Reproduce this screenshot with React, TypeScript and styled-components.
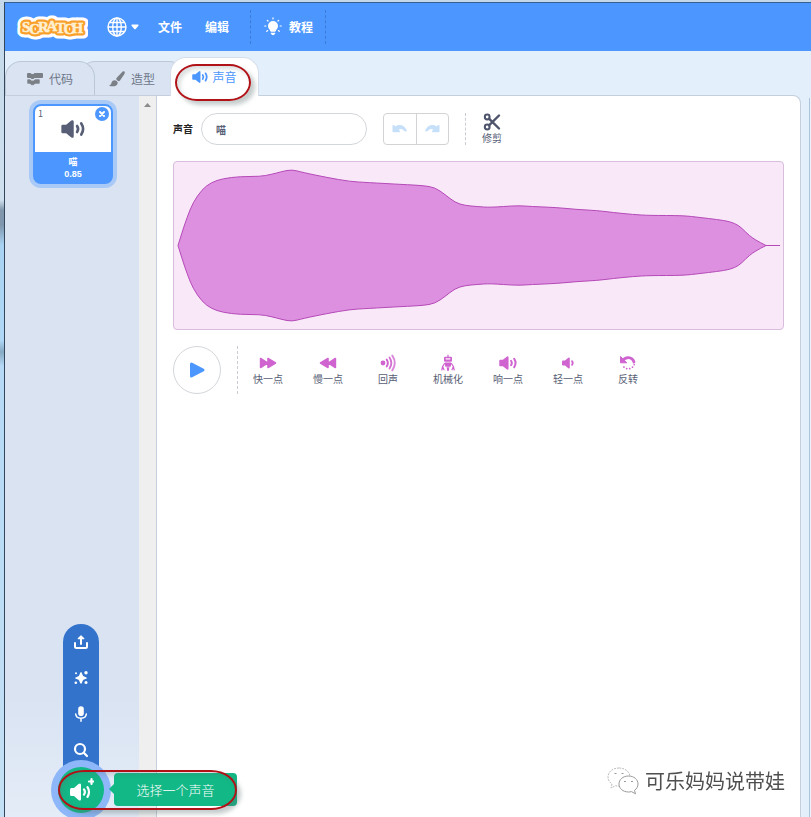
import React from "react";
import styled, { createGlobalStyle, css } from "styled-components";

const font = `"Noto Sans CJK SC", "Liberation Sans", sans-serif`;
const blue = "#4c97ff";
const slate = "#575e75";
const line = "#c5cfdb";
const panel = "#d9e3f2";
const violet = "#cf63cf";

const GlobalStyle = createGlobalStyle`
  *, *::before, *::after { box-sizing: border-box; }
  body { margin: 0; font-family: ${font}; font-size: 12px; color: ${slate}; }
  button, input { font: inherit; color: inherit; margin: 0; padding: 0; border: 0; background: none; }
  button { cursor: pointer; }
  svg { display: block; flex: none; }
`;

const Desktop = styled.div`
  height: 100vh;
  min-height: 640px;
  padding: 2px 0 0 4px;
  overflow: hidden;
  background: linear-gradient(#c3d9ea 0, #cfe0ee 200px, #8297ad 210px, #7f96ae 225px, #a9d3f2 245px, #b0d8f6 340px, #86a9c4 352px, #b5d9f6 366px, #c4e0f4 100%);
`;

const Window = styled.div`
  height: 100%;
  display: flex;
  flex-direction: column;
  border-top: 1px solid #35608f;
  border-left: 1px solid #34465c;
  background: #e4effc;
`;

const MenuBar = styled.header`
  flex: none;
  height: 48px;
  display: flex;
  align-items: center;
  padding-left: 10px;
  background: ${blue};
  color: #fff;
  font-weight: 700;
`;

const MenuButton = styled.button<{ $start?: number }>`
  display: flex;
  align-items: center;
  gap: 4px;
  line-height: 16px;
  margin-left: ${(p) => p.$start ?? 0}px;
`;

const MenuDivider = styled.span<{ $start: number }>`
  width: 0;
  height: 34px;
  margin-left: ${(p) => p.$start}px;
  border-left: 1px dashed #3b7bd6;
`;

const Tabs = styled.nav`
  flex: none;
  display: flex;
  align-items: flex-end;
  height: 44px;
`;

const Tab = styled.button<{ $active?: boolean; $tuck?: boolean }>`
  position: relative;
  display: flex;
  align-items: center;
  justify-content: center;
  gap: 6px;
  width: 90px;
  height: 34px;
  line-height: 16px;
  border: 1px solid #bcc8d6;
  border-bottom: 0;
  border-radius: 16px 16px 0 0;
  background: ${panel};
  color: #6f7689;
  z-index: 1;
  ${(p) =>
    p.$tuck &&
    css`
      width: 106px;
      margin-left: -16px;
      z-index: 0;
    `}
  ${(p) =>
    p.$active &&
    css`
      gap: 4px;
      width: 89px;
      height: 39px;
      margin-left: -15px;
      margin-bottom: -1px;
      border-color: #d5deea;
      background: #fff;
      color: ${blue};
      z-index: 2;
    `}
`;

const Marker = styled.span<{ $wide?: boolean }>`
  position: absolute;
  top: ${(p) => (p.$wide ? -3 : 6)}px;
  left: ${(p) => (p.$wide ? -56 : 4)}px;
  width: ${(p) => (p.$wide ? 179 : 76)}px;
  height: ${(p) => (p.$wide ? 40 : 37)}px;
  border: 2px solid #b01218;
  border-radius: ${(p) => (p.$wide ? "26px / 20px" : "22px / 19px")};
  box-shadow: 4px 4px 4px rgba(90, 110, 110, 0.35), inset 3px 3px 4px rgba(90, 110, 110, 0.22);
  pointer-events: none;
`;

const Body = styled.div`
  flex: 1;
  min-height: 0;
  display: grid;
  grid-template-columns: 152px minmax(0, 1fr) 2px;
`;

const Sidebar = styled.aside`
  position: relative;
  display: flex;
  border-top: 1px solid ${line};
  border-right: 1px solid ${line};
  background: linear-gradient(${panel} 0, ${panel} 600px, #e4ecf7 100%);
`;

const SoundList = styled.div`
  flex: 1;
  display: flex;
  flex-direction: column;
  align-items: center;
  padding: 8px 0 0 2px;
`;

const ScrollTrack = styled.div`
  width: 17px;
  padding-top: 7px;
  display: flex;
  justify-content: center;
  background: #efeff0;
`;

const SoundCard = styled.div`
  position: relative;
  width: 80px;
  height: 80px;
  display: flex;
  flex-direction: column;
  border: 2px solid ${blue};
  border-radius: 8px;
  background: ${blue};
  box-shadow: 0 0 0 4px #a9c9f6;
`;

const CardPreview = styled.div`
  height: 46px;
  display: flex;
  align-items: center;
  justify-content: center;
  border-radius: 6px 6px 0 0;
  background: #fff;
`;

const CardIndex = styled.span`
  position: absolute;
  top: 2px;
  left: 3px;
  font-size: 9px;
  line-height: 12px;
`;

const CardClose = styled.button`
  position: absolute;
  top: 1px;
  right: 2px;
  width: 14px;
  height: 14px;
  display: grid;
  place-items: center;
  border-radius: 50%;
  background: ${blue};
`;

const CardCaption = styled.div`
  flex: 1;
  padding-top: 4px;
  text-align: center;
  color: #fff;
  font-size: 9px;
  font-weight: 700;
  line-height: 12px;
`;

const CardText = styled.div`
  font-family: "Liberation Sans", ${font};
  font-size: 9px;
`;

const AddMenu = styled.div`
  position: absolute;
  bottom: 4px;
  left: 0;
  right: 0;
  display: flex;
  flex-direction: column;
  align-items: center;
`;

const AddOptions = styled.div`
  display: flex;
  flex-direction: column;
  width: 36px;
  height: 165px;
  margin-bottom: -22px;
  border-radius: 18px 18px 0 0;
  background: #3373cc;
`;

const AddOption = styled.button`
  width: 36px;
  height: 36px;
  display: grid;
  place-items: center;
`;

const AddButton = styled.button`
  position: relative;
  width: 46px;
  height: 46px;
  display: grid;
  place-items: center;
  border-radius: 50%;
  background: #12b886;
  box-shadow: 0 0 0 7px #8db7f8;
`;

const Tip = styled.div`
  position: absolute;
  z-index: 3;
  bottom: 11px;
  left: 109px;
  width: 123px;
  height: 33px;
  display: grid;
  place-items: center;
  border-radius: 4px;
  background: #12b886;
  color: #fff;
  font-size: 13px;
  font-weight: 300;
  line-height: 20px;
  &::before {
    content: "";
    position: absolute;
    left: -5px;
    top: 11px;
    border: 5px solid transparent;
    border-left: 0;
    border-right-color: #12b886;
  }
`;

const Editor = styled.main`
  display: flex;
  flex-direction: column;
  gap: 16px;
  min-width: 0;
  margin-right: 8px;
  padding: 17px 16px 16px;
  border-top: 1px solid ${line};
  border-right: 1px solid ${line};
  border-top-right-radius: 8px;
  background: #fff;
`;

const StageEdge = styled.div`
  margin-top: 3px;
  border-left: 1px solid #a9c3d8;
  background: #eaf2fc;
`;

const Row = styled.div`
  display: flex;
  align-items: center;
`;

const NameLabel = styled.label`
  display: flex;
  align-items: center;
  gap: 8px;
  font-size: 10px;
  line-height: 14px;
  font-weight: 700;
  color: #222;
`;

const NameInput = styled.input`
  width: 166px;
  height: 32px;
  padding: 0 14px;
  border: 1px solid #d3d6da;
  border-radius: 16px;
  color: ${slate};
  font-size: 10px;
  outline: 0;
`;

const History = styled.div`
  display: flex;
  width: 66px;
  height: 32px;
  margin-left: 16px;
  border: 1px solid #d3d3d6;
  border-radius: 4px;
`;

const HistoryButton = styled.button`
  flex: 1;
  display: grid;
  place-items: center;
  & + & {
    border-left: 1px solid #d3d3d6;
  }
`;

const Dash = styled.span<{ $tall?: boolean }>`
  height: ${(p) => (p.$tall ? 48 : 32)}px;
  margin-left: 16px;
  border-left: 1px dashed #c9ccd2;
`;

const ToolButton = styled.button<{ $compact?: boolean }>`
  width: ${(p) => (p.$compact ? 52 : 60)}px;
  display: flex;
  flex-direction: column;
  align-items: center;
  font-size: 10px;
  line-height: 14px;
`;

const Wave = styled.div`
  height: 169px;
  border: 1px solid #d9bddc;
  border-radius: 4px;
  background: #f8e8f8;
  svg {
    width: 100%;
    height: 100%;
  }
`;

const PlayButton = styled.button`
  width: 48px;
  height: 48px;
  display: grid;
  place-items: center;
  border: 1px solid #d3d6da;
  border-radius: 50%;
`;

const Signature = styled.div`
  position: fixed;
  right: 26px;
  bottom: 21px;
  display: flex;
  align-items: center;
  gap: 6px;
  font-size: 20px;
  line-height: 30px;
  color: #4f4f4f;
`;

/* Half heights of the recorded sound along the 609 unit wide track. */
const samples: [number, number][] = [
  [4, 0], [8, 13], [13, 28], [19, 43], [28, 56], [37, 63], [49, 67], [66, 69], [86, 69],
  [97, 71], [108, 74], [118, 76], [129, 73], [153, 68], [176, 64], [193, 63], [229, 61],
  [249, 60], [261, 58], [271, 51], [281, 43], [291, 40], [303, 39], [316, 38], [343, 40],
  [357, 39], [383, 38], [403, 36], [423, 35], [439, 33], [459, 31], [476, 30], [509, 30],
  [526, 28], [543, 26], [556, 24], [565, 20], [571, 14], [580, 6], [592, 0],
];

function smooth(points: [number, number][]) {
  let d = "";
  for (let i = 1; i < points.length - 1; i++) {
    const [x, y] = points[i];
    const [nx, ny] = points[i + 1];
    const last = i === points.length - 2;
    d += ` Q${x} ${y} ${last ? nx : (x + nx) / 2} ${last ? ny : (y + ny) / 2}`;
  }
  return d;
}

function Waveform() {
  const mid = 83.5;
  const top = samples.map(([x, a]) => [x, mid - a] as [number, number]);
  const low = samples.map(([x, a]) => [x, mid + a] as [number, number]).reverse();
  return (
    <svg viewBox="0 0 609 167" preserveAspectRatio="none" aria-hidden="true">
      <path
        d={`M4 ${mid}${smooth(top)} H606 H592${smooth(low)} Z`}
        fill="#dd90e0"
        stroke="#b549b8"
        vectorEffect="non-scaling-stroke"
      />
    </svg>
  );
}

function Logo() {
  const letters = {
    x: "7 14 23 31.5 40.5 48.500 56.500",
    y: "20 21.500 20 18.500 20.500 21.500 20.500",
    fontFamily: "Liberation Serif",
    fontSize: 15,
  } as const;
  return (
    <svg width="73" height="30" viewBox="0 0 73 30" role="img" aria-label="Scratch">
      <g strokeLinejoin="round">
        <text {...letters} fill="#fff" stroke="#fff" strokeWidth="11">SCRATCH</text>
        <text {...letters} fill="#f9a02c" stroke="#f9a02c" strokeWidth="5">SCRATCH</text>
        <text {...letters} fill="#fff0d2" stroke="#fff0d2" strokeWidth=".5">SCRATCH</text>
      </g>
    </svg>
  );
}

function Globe() {
  return (
    <svg width="20" height="20" viewBox="0 0 20 20" fill="none" stroke="#fff" strokeWidth="1.4">
      <circle cx="10" cy="10" r="9" />
      <ellipse cx="10" cy="10" rx="4.3" ry="9" />
      <path d="M10 1v18M1 10h18M2.4 5.5h15.2M2.4 14.5h15.2" />
    </svg>
  );
}

function Caret() {
  return (
    <svg width="8" height="6" viewBox="0 0 8 6">
      <path d="M1 .5h6q1 .4.4 1.2L4.7 5q-.7.7-1.4 0L.6 1.7Q0 .9 1 .5z" fill="#fff" />
    </svg>
  );
}

function Bulb() {
  return (
    <svg width="21" height="20" viewBox="0 0 21 20" fill="#fff">
      <path d="M9 4a5 5 0 0 0-5 5c0 2 1.200 3 1.900 4.100.3.6.4 1.300.9 1.600h4.400c.5-.3.6-1 .9-1.600C12.800 12 14 11 14 9a5 5 0 0 0-5-5zM6.800 15.800h4.400v1q-2.200 2.800-4.400 0z" />
      <path d="M9 .8v1.200M3.300 3.300l.7.7M14.700 3.300l-.7.7M.7 9h1.200M16.100 9h1.200M2.700 14.300l1-.7M15.300 14.300l-1-.7" stroke="#fff" strokeWidth="1.200" strokeLinecap="round" />
    </svg>
  );
}

function CodeIcon() {
  return (
    <svg width="16" height="14" viewBox="0 0 16 14" fill="#7b7f86">
      <path d="M1 1h2.500l1 1h2l1-1H15q1 0 1 1v3q0 1-1 1H7.500l-1 1h-2l-1-1H1Q0 6 0 5V2q0-1 1-1z" />
      <path d="M1 7h2l1.500 1.300h2.200L8 7h4q1 0 1 1v3q0 1-1 1H8l-1.300 1.300H4.500L3 12H1q-1 0-1-1V8q0-1 1-1z" stroke={panel} strokeWidth=".6" />
    </svg>
  );
}

function BrushIcon() {
  return (
    <svg width="16" height="16" viewBox="0 0 16 16" fill="#7b7f86">
      <path d="M15.400.6c.8.7.4 1.800-.3 3L11 9.500c-.6.8-1.400 1-2.300.3L7.800 9c-.8-.7-.7-1.500 0-2.200L12.700 1.400c1-1 2-1.500 2.700-.8z" />
      <path d="M6.300 9.400c1.500.2 2.500 1.300 2.400 2.600-.2 2.600-3.200 4-8 3.100-.5-.1-.5-.7 0-.9 1.500-.6 1.300-1.400 1.900-2.700.6-1.400 2-2.300 3.700-2.100z" />
    </svg>
  );
}

type SpeakerProps = { size: number; color: string; waves?: number };

function Speaker({ size, color, waves = 2 }: SpeakerProps) {
  return (
    <svg width={size} height={size} viewBox="0 0 20 20" fill="none" stroke={color} strokeWidth="2.200" strokeLinecap="round">
      <path d="M1.300 6.500h3L8.600 3Q10.600 1.900 10.600 4v12q0 2.100-2 1L4.300 13.500h-3Q.3 13.500.3 12.500v-5q0-1 1-1z" fill={color} stroke="none" />
      <path d="M13.400 7.500q1.700 2.500 0 5" />
      {waves > 1 && <path d="M16.900 5.400q3 4.600 0 9.200" />}
    </svg>
  );
}

/* The quieter variant: a smaller cone with a single wave. */
function SoftSpeaker() {
  return (
    <svg width="18" height="18" viewBox="0 0 18 18" fill="none" stroke={violet} strokeWidth="1.800" strokeLinecap="round">
      <path d="M4 6.500h2L9.300 3.800q1.500-.9 1.500.8v8.800q0 1.700-1.500.8L6 11.500H4q-1 0-1-1v-3q0-1 1-1z" fill={violet} stroke="none" />
      <path d="M13 7.200q1.500 1.800 0 3.600" />
    </svg>
  );
}

function UndoArrow({ flip }: { flip?: boolean }) {
  return (
    <svg width="16" height="12" viewBox="0 0 16 12" fill="#c7e0fa">
      <path transform={flip ? "matrix(-1 0 0 1 16 0)" : undefined} d="M1 2q.8-.3 1.300.3l1.200 1.200C7 .8 12.500 1.800 14.800 7.500q.2 1.300-1 1l-2-.8C10.500 6 8.500 5.600 6.700 6.700l1.200 1.200q.6 1.200-.6 1.400H1.400q-.9 0-.9-.9V3Q.5 2.300 1 2z" />
    </svg>
  );
}

function Scissors() {
  return (
    <svg width="18" height="18" viewBox="0 0 18 18" fill="none" stroke="#4d546c" strokeWidth="2">
      <circle cx="4.200" cy="4" r="2.400" />
      <circle cx="4.200" cy="14" r="2.400" />
      <path d="M6 5.700L16 15.500M6 12.300L16 2.500" strokeWidth="2.400" strokeLinecap="round" />
    </svg>
  );
}

function FastIcon({ back }: { back?: boolean }) {
  return (
    <svg width="18" height="18" viewBox="0 0 18 18" fill={violet} stroke={violet} strokeWidth="1.600" strokeLinejoin="round">
      <path transform={back ? "matrix(-1 0 0 1 18 0)" : undefined} d="M1.600 4.500v9L8.500 9zM9 4.500v9L16.500 9z" />
    </svg>
  );
}

function EchoIcon() {
  return (
    <svg width="18" height="18" viewBox="0 0 18 18" fill="none" stroke={violet} strokeWidth="1.900" strokeLinecap="round">
      <circle cx="4" cy="9" r="2.400" fill={violet} stroke="none" />
      <path d="M7.700 5.600q2.300 3.400 0 6.800" />
      <path d="M10.500 3.500q3.700 5.500 0 11" opacity=".9" />
      <path d="M13.300 1.600q5 7.400 0 14.800" opacity=".75" />
    </svg>
  );
}

function RobotIcon() {
  return (
    <svg width="18" height="18" viewBox="0 0 18 18" fill={violet}>
      <path d="M8.400.8h1.200v2H12q1 0 1 1v3q0 1-1 1H6q-1 0-1-1v-3q0-1 1-1h2.400z" />
      <path d="M6.700 4.300h4.600v1.200H6.700z" fill="#fff" />
      <path d="M6 8.500h6v3.300q0 1-1 1H7q-1 0-1-1z M7.600 13.200h2.800L9.700 17H8.300z" />
      <path d="M5.500 9.500L3.600 12.500 2.800 16M3.600 12.500L5 15.800M12.500 9.500l1.900 3 .8 3.500M14.400 12.500L13 15.800" fill="none" stroke={violet} strokeWidth="1.200" strokeLinecap="round" />
    </svg>
  );
}

function ReverseIcon() {
  return (
    <svg width="18" height="18" viewBox="0 0 18 18" fill="none" stroke={violet}>
      <path d="M3.800 6.800C6 2.500 13 2 15 8" strokeWidth="2.800" strokeLinecap="round" />
      <path d="M1.500 2.600v6.200h6.300z" fill={violet} strokeLinejoin="round" />
      <path d="M15.200 10.500A6.200 6.200 0 0 1 3.800 11.500" strokeWidth="1.700" strokeLinecap="round" strokeDasharray="0.1 3" />
    </svg>
  );
}

function UploadIcon() {
  return (
    <svg width="16" height="16" viewBox="0 0 16 16" fill="none" stroke="#fff" strokeWidth="2" strokeLinecap="round" strokeLinejoin="round">
      <path d="M2 9v3.500Q2 14 3.500 14h9q1.500 0 1.500-1.500V9M8 10V4" />
      <path d="M5.200 4.600L8 1.800l2.800 2.800z" fill="#fff" strokeWidth="1.200" />
    </svg>
  );
}

function SurpriseIcon() {
  return (
    <svg width="16" height="16" viewBox="0 0 16 16" fill="#fff">
      <path d="M8 2.300q.9 0 1.100 1.400.4 2.700 3.200 3.200 1.500.3 1.500 1.100t-1.500 1.100q-2.800.5-3.200 3.200Q8.900 13.700 8 13.700t-1.100-1.400Q6.500 9.600 3.700 9.100 2.200 8.800 2.200 8t1.500-1.100q2.800-.5 3.200-3.200Q7.100 2.300 8 2.300z" />
      <circle cx="13" cy="2.800" r="1.700" />
      <circle cx="3" cy="3.200" r="1" />
      <circle cx="2.800" cy="12.800" r="1.300" />
      <circle cx="13" cy="12.600" r="1.500" />
    </svg>
  );
}

function MicIcon() {
  return (
    <svg width="16" height="16" viewBox="0 0 16 16" fill="none" stroke="#fff" strokeWidth="1.500" strokeLinecap="round">
      <rect x="5.200" y=".3" width="5.600" height="9.700" rx="2.800" fill="#fff" stroke="none" />
      <path d="M2.700 8c.5 5.600 10.100 5.600 10.600 0M8 12.500v2.700" />
    </svg>
  );
}

function SearchIcon() {
  return (
    <svg width="16" height="16" viewBox="0 0 16 16" fill="none" stroke="#fff" strokeWidth="2.200" strokeLinecap="round">
      <circle cx="7" cy="7" r="5" />
      <path d="M10.800 10.800L14 14" />
    </svg>
  );
}

function AddSoundIcon() {
  return (
    <svg width="26" height="26" viewBox="0 0 26 26" fill="none" stroke="#fff" strokeWidth="2.200" strokeLinecap="round">
      <path d="M3.500 11H6l4.500-4q2.500-1.500 2.500 1v14q0 2.500-2.500 1L6 19H3.500Q2 19 2 17.500v-5Q2 11 3.500 11z" fill="#fff" stroke="none" />
      <path d="M16 12.500q1.800 2.500 0 5M19.500 10.200q3 4.800 0 9.600M23.500 2v5M21 4.500h5" />
    </svg>
  );
}

function ChatBubbles() {
  return (
    <svg width="32" height="30" viewBox="0 0 32 30" fill="#fff" stroke="#999" strokeWidth="1">
      <path d="M12 2C5.500 2 1 6 1 11c0 3 1.500 5.300 4 7l-1 4 4.500-2.300c1.200.3 2.300.4 3.500.4 6 0 11-4 11-9S18.500 2 12 2z" stroke="#bbb" strokeDasharray="2 1" />
      <path d="M21.500 10C16 10 12 13.500 12 18s4 8 9.500 8c1 0 2-.1 3-.4l4 2.200-1-3.500c2.200-1.500 3.500-3.700 3.500-6.300 0-4.500-4-8-9.500-8z" />
      <path d="M7.500 7.500h2M14.500 7.500h2M17 15.500h2M24 15.500h2" />
    </svg>
  );
}

const effects = [
  { name: "快一点", icon: <FastIcon /> },
  { name: "慢一点", icon: <FastIcon back /> },
  { name: "回声", icon: <EchoIcon /> },
  { name: "机械化", icon: <RobotIcon /> },
  { name: "响一点", icon: <Speaker size={18} color={violet} /> },
  { name: "轻一点", icon: <SoftSpeaker /> },
  { name: "反转", icon: <ReverseIcon /> },
];

const addOptions = [
  { name: "上传声音", icon: <UploadIcon /> },
  { name: "随机", icon: <SurpriseIcon /> },
  { name: "录制", icon: <MicIcon /> },
  { name: "选择一个声音", icon: <SearchIcon /> },
];

export default function App() {
  return (
    <Desktop>
      <GlobalStyle />
      <Window>
        <MenuBar>
          <Logo />
          <MenuButton $start={19} aria-label="语言">
            <Globe />
            <Caret />
          </MenuButton>
          <MenuButton $start={19}>文件</MenuButton>
          <MenuButton $start={23}>编辑</MenuButton>
          <MenuDivider $start={21} />
          <MenuButton $start={13}>
            <Bulb />
            教程
          </MenuButton>
          <MenuDivider $start={12} />
        </MenuBar>
        <Tabs>
          <Tab>
            <CodeIcon />
            代码
          </Tab>
          <Tab $tuck>
            <BrushIcon />
            造型
          </Tab>
          <Tab $active>
            <Speaker size={16} color={blue} />
            声音
            <Marker />
          </Tab>
        </Tabs>
        <Body>
          <Sidebar>
            <SoundList>
              <SoundCard>
                <CardIndex>1</CardIndex>
                <CardPreview>
                  <Speaker size={24} color={slate} />
                </CardPreview>
                <CardClose aria-label="删除">
                  <svg width="8" height="8" viewBox="0 0 8 8" stroke="#fff" strokeWidth="2" strokeLinecap="round">
                    <path d="M2 2l4 4M6 2L2 6" />
                  </svg>
                </CardClose>
                <CardCaption>
                  喵
                  <CardText>0.85</CardText>
                </CardCaption>
              </SoundCard>
            </SoundList>
            <ScrollTrack>
              <svg width="7" height="4" viewBox="0 0 7 4">
                <path d="M0 4L3.500 0 7 4z" fill="#8b8b8b" />
              </svg>
            </ScrollTrack>
            <AddMenu>
              <AddOptions>
                {addOptions.map((o) => (
                  <AddOption key={o.name} aria-label={o.name}>
                    {o.icon}
                  </AddOption>
                ))}
              </AddOptions>
              <AddButton aria-label="添加声音">
                <AddSoundIcon />
              </AddButton>
            </AddMenu>
            <Tip>
              选择一个声音
              <Marker $wide />
            </Tip>
          </Sidebar>
          <Editor>
            <Row>
              <NameLabel>
                声音
                <NameInput defaultValue="喵" />
              </NameLabel>
              <History>
                <HistoryButton aria-label="撤销">
                  <UndoArrow />
                </HistoryButton>
                <HistoryButton aria-label="重做">
                  <UndoArrow flip />
                </HistoryButton>
              </History>
              <Dash />
              <ToolButton $compact>
                <Scissors />
                修剪
              </ToolButton>
            </Row>
            <Wave>
              <Waveform />
            </Wave>
            <Row>
              <PlayButton aria-label="播放">
                <svg width="18" height="18" viewBox="0 0 18 18">
                  <path d="M3.500 3L15 9 3.500 15z" fill={blue} stroke={blue} strokeWidth="3" strokeLinejoin="round" />
                </svg>
              </PlayButton>
              <Dash $tall />
              {effects.map((e) => (
                <ToolButton key={e.name}>
                  {e.icon}
                  {e.name}
                </ToolButton>
              ))}
            </Row>
          </Editor>
          <StageEdge />
        </Body>
      </Window>
      <Signature>
        <ChatBubbles />
        可乐妈妈说带娃
      </Signature>
    </Desktop>
  );
}
